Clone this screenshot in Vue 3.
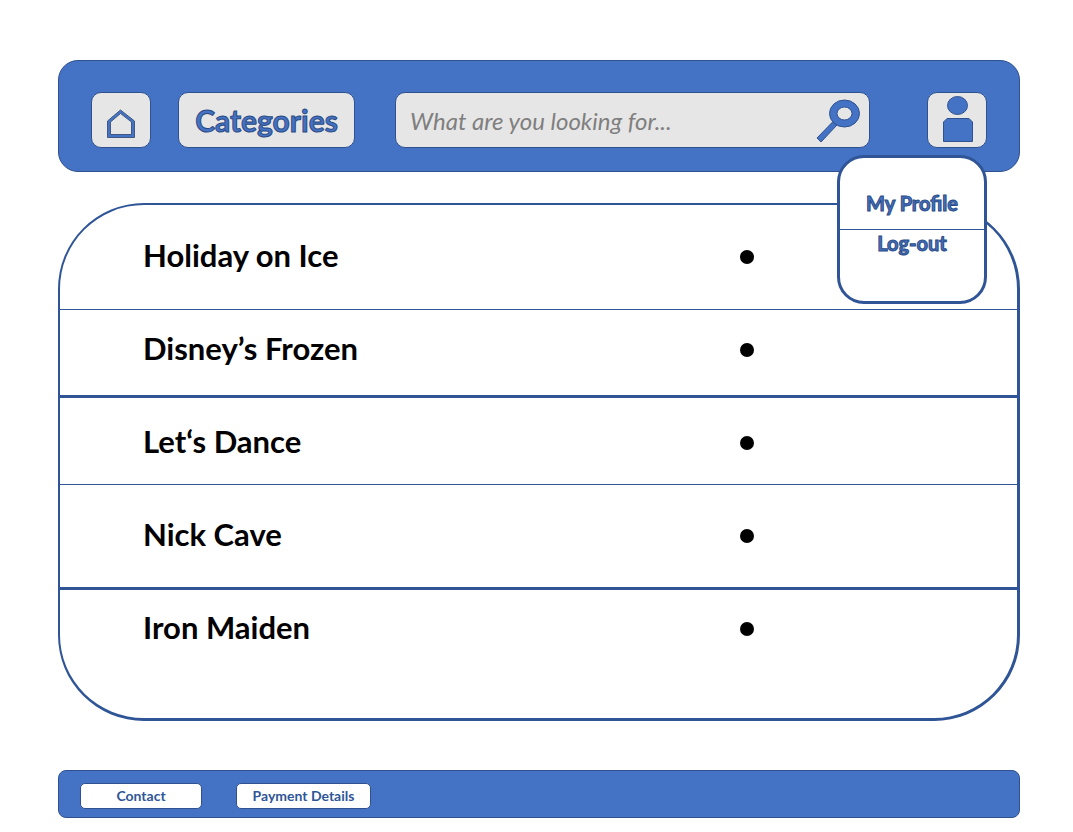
<script setup>
import { ref } from 'vue'

const query = ref('')
const events = ['Holiday on Ice', 'Disney’s Frozen', 'Let‘s Dance', 'Nick Cave', 'Iron Maiden']
</script>

<template>
  <div class="page">
    <header class="bar">
      <button class="tile icon" type="button" aria-label="Home">
        <svg width="30" height="32" viewBox="0 0 30 32" aria-hidden="true">
          <path
            class="shape house"
            fill-rule="evenodd"
            d="M1.500 29.500V13L14.500 2L28.500 13V29.500ZM4.500 26.500H25.500V14L14.500 5.500L4.500 14Z"
          />
        </svg>
      </button>
      <button class="tile categories outlined" type="button">Categories</button>
      <form class="tile search" role="search" @submit.prevent>
        <input v-model="query" type="text" aria-label="Search" placeholder="What are you looking for..." />
        <button class="find" type="submit" aria-label="Find">
          <svg width="46" height="46" viewBox="0 0 46 46" aria-hidden="true">
            <path class="shape" d="M17 24.500L21 28L5 45L1 41Z" />
            <path
              class="shape"
              fill-rule="evenodd"
              d="M13.500 16.500a15 13.500 0 1 0 30 0a15 13.500 0 1 0 -30 0ZM21 16.500a7.500 6.500 0 1 0 15 0a7.500 6.500 0 1 0 -15 0Z"
            />
          </svg>
        </button>
      </form>
      <div class="account">
        <button class="tile icon" type="button" aria-label="Account" aria-expanded="true">
          <svg width="32" height="48" viewBox="0 0 32 48" aria-hidden="true">
            <ellipse class="shape" cx="16.500" cy="9.500" rx="10" ry="9" />
            <path class="shape" d="M2.500 45.500V26L6 22.500H28L31.500 26V45.500Z" />
          </svg>
        </button>
        <nav class="menu">
          <a class="outlined" href="#profile">My Profile</a>
          <a class="outlined" href="#logout">Log-out</a>
        </nav>
      </div>
    </header>

    <ul class="events">
      <li v-for="event in events" :key="event">
        <span class="name">{{ event }}</span>
        <i class="dot"></i>
      </li>
    </ul>

    <footer class="footer">
      <a class="contact" href="#contact">Contact</a>
      <a class="payment" href="#payment">Payment Details</a>
    </footer>
  </div>
</template>

<style>
body {
  margin: 0;
  background: #fff;
}
</style>

<style scoped>
.page,
.page * {
  box-sizing: border-box;
}
.page {
  padding: 60px 53px 14px 58px;
  font-family: Lato, "Liberation Sans", sans-serif;
}
.bar {
  display: flex;
  padding: 31px 32px 23px;
  border: 1px solid #2f528f;
  border-radius: 20px;
  background: #4472c4;
}
.tile {
  height: 56px;
  padding: 0;
  border: 1px solid #2f528f;
  border-radius: 10px;
  background: #e7e6e6;
  font-family: inherit;
}
.icon {
  display: flex;
  align-items: center;
  justify-content: center;
  width: 60px;
}
.bar > .icon {
  padding-top: 7px;
}
.shape {
  fill: #4472c4;
  stroke: #2f528f;
  stroke-width: 1;
}
.house {
  stroke: #41597f;
}
.outlined {
  color: #4472c4;
  font-weight: 700;
  -webkit-text-stroke: 1px #2a4a82;
}
.categories {
  width: 177px;
  margin: 0 40px 0 27px;
  font-size: 30px;
}
.search {
  display: flex;
  flex: 1;
  align-items: center;
  min-width: 0;
  margin-right: 57px;
  padding: 0 7px 0 14px;
}
.search input {
  flex: 1;
  min-width: 0;
  padding: 0;
  border: 0;
  outline: 0;
  background: transparent;
  color: #7f7f7f;
  font: italic 24px Lato, sans-serif;
}
.search input::placeholder {
  color: #7f7f7f;
  opacity: 1;
}
.find {
  display: flex;
  padding: 0;
  border: 0;
  background: transparent;
}
.account {
  position: relative;
}
.menu {
  position: absolute;
  z-index: 1;
  top: 63px;
  right: 0;
  width: 150px;
  border: 3px solid #2f5597;
  border-radius: 27px;
  background: #fff;
  text-align: center;
}
.menu a {
  display: block;
  height: 71px;
  font-size: 20px;
  line-height: 26px;
  text-decoration: none;
}
.menu a:first-child {
  height: 72px;
  padding-top: 32px;
  border-bottom: 1px solid #2f5597;
}
.events {
  margin: 31px 0 50px;
  padding: 0;
  border: solid #2f5597;
  border-width: 2px 3px 3px 2px;
  border-radius: 86px;
  list-style: none;
  color: #000;
  font-size: 31px;
  font-weight: 700;
  line-height: 36px;
}
.events li {
  display: flex;
  align-items: center;
  justify-content: space-between;
  height: 105px;
  padding: 0 263px 0 83px;
  border-bottom: 1px solid #2f5597;
}
.events li:nth-child(2) {
  height: 88px;
  padding-bottom: 6px;
  border-bottom-width: 3px;
}
.events li:nth-child(3) {
  height: 87px;
  padding-top: 4px;
}
.events li:nth-child(4) {
  height: 105px;
  border-bottom-width: 3px;
}
.events li:last-child {
  height: 128px;
  padding-bottom: 50px;
  border-bottom: 0;
}
.name {
  padding-bottom: 4px;
}
.dot {
  width: 14px;
  height: 14px;
  border-radius: 50%;
  background: #000;
}
.footer {
  display: flex;
  gap: 34px;
  padding: 12px 21px 8px;
  border: 1px solid #2f528f;
  border-radius: 8px;
  background: #4472c4;
}
.events + .footer {
  margin-top: -1px;
}
.footer a {
  height: 26px;
  border: 1px solid #2f528f;
  border-radius: 5px;
  background: #fff;
  color: #2f5597;
  font-size: 14px;
  font-weight: 700;
  line-height: 24px;
  text-align: center;
  text-decoration: none;
}
.contact {
  width: 122px;
}
.payment {
  width: 135px;
}
</style>
